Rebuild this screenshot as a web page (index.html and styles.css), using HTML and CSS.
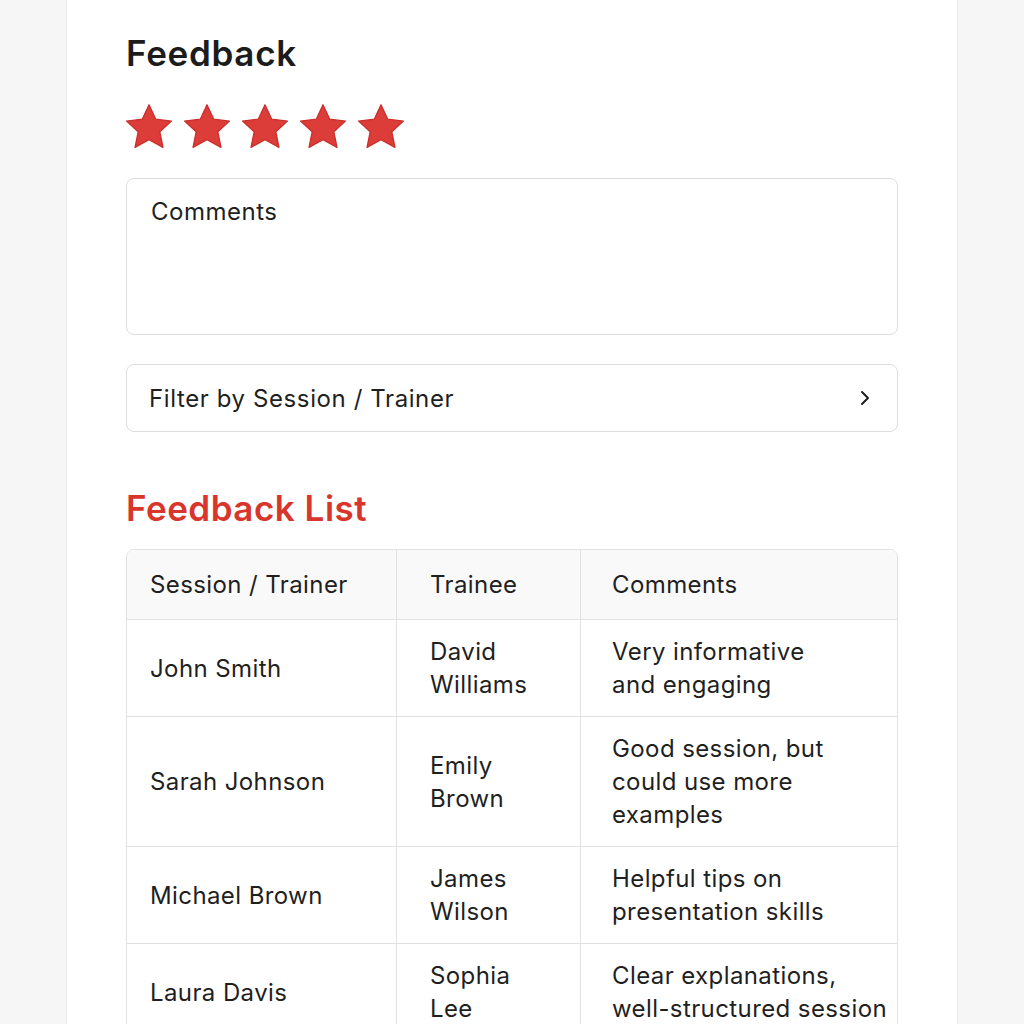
FILE: index.html
```html
<!DOCTYPE html>
<html lang="en">
<head>
  <meta charset="UTF-8">
  <meta name="viewport" content="width=device-width, initial-scale=1">
  <title>Feedback</title>
  <link rel="stylesheet" href="styles.css">
</head>
<body>

  <div class="card">
    <h1 class="title">Feedback</h1>

    <div class="stars">
      <svg class="star" viewBox="0 0 48 46"><path d="M24 2.5l6.2 13.3 14.5 1.7-10.7 9.9 2.9 14.4L24 34.6 11.1 41.8 14 27.4 3.3 17.5l14.5-1.7z"/></svg>
      <svg class="star" viewBox="0 0 48 46"><path d="M24 2.5l6.2 13.3 14.5 1.7-10.7 9.9 2.9 14.4L24 34.6 11.1 41.8 14 27.4 3.3 17.5l14.5-1.7z"/></svg>
      <svg class="star" viewBox="0 0 48 46"><path d="M24 2.5l6.2 13.3 14.5 1.7-10.7 9.9 2.9 14.4L24 34.6 11.1 41.8 14 27.4 3.3 17.5l14.5-1.7z"/></svg>
      <svg class="star" viewBox="0 0 48 46"><path d="M24 2.5l6.2 13.3 14.5 1.7-10.7 9.9 2.9 14.4L24 34.6 11.1 41.8 14 27.4 3.3 17.5l14.5-1.7z"/></svg>
      <svg class="star" viewBox="0 0 48 46"><path d="M24 2.5l6.2 13.3 14.5 1.7-10.7 9.9 2.9 14.4L24 34.6 11.1 41.8 14 27.4 3.3 17.5l14.5-1.7z"/></svg>
    </div>

    <textarea class="comments" placeholder="Comments"></textarea>

    <div class="filter">
      <span>Filter by Session / Trainer</span>
      <svg class="chevron" viewBox="0 0 12 16"><path d="M3 2l6 6-6 6"/></svg>
    </div>

    <h2 class="list-title">Feedback List</h2>

    <table class="feedback-table">
      <colgroup>
        <col class="col-session">
        <col class="col-trainee">
        <col class="col-comments">
      </colgroup>
      <thead>
        <tr>
          <th>Session / Trainer</th>
          <th>Trainee</th>
          <th>Comments</th>
        </tr>
      </thead>
      <tbody>
        <tr>
          <td>John Smith</td>
          <td>David<br>Williams</td>
          <td>Very informative<br>and engaging</td>
        </tr>
        <tr>
          <td>Sarah Johnson</td>
          <td>Emily<br>Brown</td>
          <td>Good session, but<br>could use more<br>examples</td>
        </tr>
        <tr>
          <td>Michael Brown</td>
          <td>James<br>Wilson</td>
          <td>Helpful tips on<br>presentation skills</td>
        </tr>
        <tr>
          <td>Laura Davis</td>
          <td>Sophia<br>Lee</td>
          <td>Clear explanations,<br>well-structured session</td>
        </tr>
      </tbody>
    </table>
  </div>

</body>
</html>
```

FILE: styles.css
```css
body {
  margin: 0;
  padding: 0;
  background: #f6f6f6;
  font-family: Inter, "Noto Sans", sans-serif;
  color: #1f1f1f;
  overflow: hidden;
}

.card {
  margin: 0 66px;
  min-height: 1100px;
  background: #fff;
  border-left: 1px solid #ececec;
  border-right: 1px solid #ececec;
  padding: 31px 59px 0;
}

.title {
  margin: 0;
  font-size: 35px;
  line-height: 44px;
  font-weight: 600;
  color: #1c1c1c;
  letter-spacing: 0.7px;
}

.stars {
  display: flex;
  gap: 6px;
  margin: 27px 0 0 -3px;
  height: 50px;
}

.star {
  width: 52px;
  height: 50px;
}

.star path {
  fill: #dc3d38;
  stroke: #c9302c;
  stroke-width: 1.2;
  stroke-linejoin: round;
}

.comments {
  display: block;
  box-sizing: border-box;
  width: 100%;
  height: 157px;
  margin-top: 26px;
  padding: 16px 24px;
  border: 1px solid #dedede;
  border-radius: 8px;
  font-family: inherit;
  font-size: 24px;
  letter-spacing: 0.5px;
  line-height: 33px;
  color: #1f1f1f;
  resize: none;
  outline: none;
}

.comments::placeholder {
  color: #1f1f1f;
  opacity: 1;
}

.filter {
  display: flex;
  align-items: center;
  justify-content: space-between;
  box-sizing: border-box;
  height: 68px;
  margin-top: 29px;
  padding: 0 26px 0 22px;
  border: 1px solid #dedede;
  border-radius: 8px;
  font-size: 24px;
  letter-spacing: 0.6px;
}

.chevron {
  width: 12px;
  height: 16px;
}

.chevron path {
  fill: none;
  stroke: #1f1f1f;
  stroke-width: 2;
  stroke-linecap: round;
  stroke-linejoin: round;
}

.list-title {
  margin: 54px 0 0;
  font-size: 35px;
  line-height: 44px;
  font-weight: 600;
  color: #d8352d;
  letter-spacing: 0.5px;
}

.feedback-table {
  width: 100%;
  margin-top: 19px;
  border-collapse: separate;
  border-spacing: 0;
  table-layout: fixed;
  border: 1px solid #e2e2e2;
  border-radius: 8px;
  font-size: 24px;
  letter-spacing: 0.4px;
  line-height: 33px;
}

.col-session { width: 270px; }
.col-trainee { width: 184px; }

.feedback-table th,
.feedback-table td {
  text-align: left;
  vertical-align: middle;
  font-weight: 400;
  padding: 15px 4px 15px 33px;
  border-right: 1px solid #e2e2e2;
  border-bottom: 1px solid #e2e2e2;
}

.feedback-table th:first-child,
.feedback-table td:first-child {
  padding-left: 23px;
}

.feedback-table th:last-child,
.feedback-table td:last-child {
  border-right: none;
  padding-left: 31px;
}

.feedback-table th {
  background: #f9f9f9;
  padding-top: 18px;
  padding-bottom: 18px;
}

.feedback-table thead th:first-child { border-top-left-radius: 8px; }
.feedback-table thead th:last-child { border-top-right-radius: 8px; }
```
